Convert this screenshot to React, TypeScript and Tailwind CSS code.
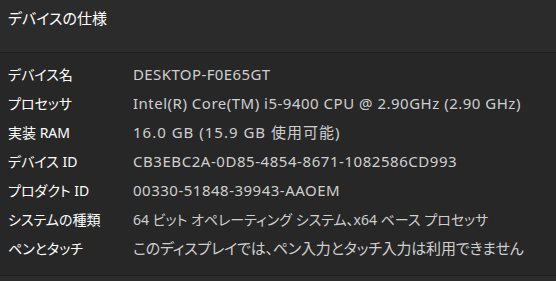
type Spec = { label: string; value: string; tone: string };

// per-row tweaks to match the Segoe/Yu Gothic widths of the original
const specs: Spec[] = [
  { label: 'デバイス名', value: 'DESKTOP-F0E65GT', tone: 'text-[15px] tracking-[0.4px]' },
  { label: 'プロセッサ', value: 'Intel(R) Core(TM) i5-9400 CPU @ 2.90GHz (2.90 GHz)', tone: 'text-[15px] tracking-[0.5px]' },
  { label: '実装 RAM', value: '16.0 GB (15.9 GB 使用可能)', tone: 'text-[15px] tracking-[1px]' },
  { label: 'デバイス ID', value: 'CB3EBC2A-0D85-4854-8671-1082586CD993', tone: 'text-[15px] tracking-[0.55px]' },
  { label: 'プロダクト ID', value: '00330-51848-39943-AAOEM', tone: 'text-[15px] tracking-[0.5px]' },
  { label: 'システムの種類', value: '64 ビット オペレーティング システム、x64 ベース プロセッサ', tone: 'text-[14px]' },
  { label: 'ペンとタッチ', value: 'このディスプレイでは、ペン入力とタッチ入力は利用できません', tone: 'text-[15px] tracking-[-0.2px]' },
];

export default function App() {
  return (
    <div
      className="h-[281px] w-[556px] overflow-hidden bg-[#272727] [font-feature-settings:'palt']"
      style={{ fontFamily: '"Noto Sans", "Noto Sans CJK JP", sans-serif' }}
    >
      <div className="flex h-[52px] items-start bg-[#2b2b2b] px-2 pt-[7px] text-[15px] text-white">
        デバイスの仕様
      </div>
      <div className="h-px bg-[#1c1c1c]" />
      <div className="flex flex-col pt-[7px] pb-[12px]">
        {specs.map((s) => (
          <div key={s.label} className="flex h-[29px] items-center px-2">
            <div className="w-[125px] shrink-0 text-[14px] text-white">{s.label}</div>
            <div className={'whitespace-nowrap text-[#cfcfcf] ' + s.tone}>{s.value}</div>
          </div>
        ))}
      </div>
      <div className="h-px bg-[#1c1c1c]" />
      <div className="h-[6px] bg-[#2b2b2b]" />
    </div>
  );
}
